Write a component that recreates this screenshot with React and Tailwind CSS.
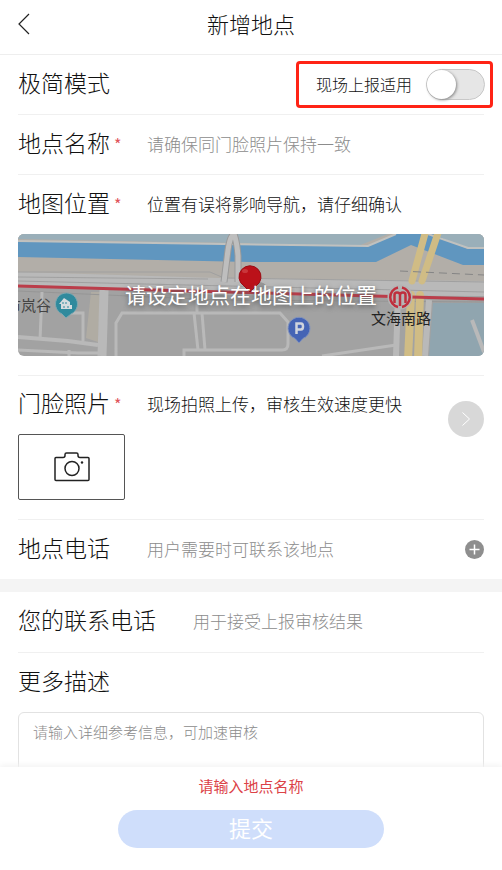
import React from "react";

function Label({ htmlFor, required, children }) {
  return (
    <label htmlFor={htmlFor} className="flex shrink-0 items-center pb-1.5 text-[23px] leading-8 text-[#111111]">
      {children}
      <span className="w-[37px] pt-1 pl-1 text-base leading-7 font-normal text-[#e0525a]">{required ? "*" : ""}</span>
    </label>
  );
}

function MapPreview() {
  return (
    <svg viewBox="0 0 466 122" preserveAspectRatio="xMidYMid slice" className="block h-full w-full" aria-hidden="true">
      <rect width="466" height="122" fill="#a2a2a2" />
      {/* land north of the main road */}
      <path d="M0 0H466V50H0Z" fill="#b2aea8" />
      <path d="M0 0H232V9L150 8L0 5Z" fill="#9aafb9" />
      <path d="M232 0H370L340 12H232Z" fill="#9aafb9" />
      <path d="M418 0H466V14L432 12Z" fill="#9aafb9" />
      {/* river */}
      <path d="M0 7L205 10L350 12L378 0H415L450 15H466V31H445L393 11L358 28H232L0 23Z" fill="#6096bf" />
      <path d="M0 7L205 10L350 12L378 0" fill="none" stroke="#c0c1bf" strokeWidth="2" />
      <path d="M410 0L450 14H466" fill="none" stroke="#c0c1bf" strokeWidth="2" />
      {/* park and lake */}
      <path d="M73 58H82L80 108L68 104Z" fill="#b0aca3" />
      <path d="M415 69H466V122H411Z" fill="#90a5af" />
      {/* main road */}
      <path d="M0 38L200 44L466 47V62L200 61L0 51Z" fill="#b9b9b9" />
      <path d="M0 38H192L206 44L466 48" fill="none" stroke="#a0a0a0" />
      <path d="M0 43L190 45" fill="none" stroke="#a0a0a0" />
      <path d="M0 47L466 58" fill="none" stroke="#a0a0a0" />
      <path d="M0 57L200 66L466 68" fill="none" stroke="#969696" />
      <path d="M206 48L210 16Q212 2 216 0Q219 8 220 22V48" fill="none" stroke="#999999" strokeWidth="7" />
      <path d="M206 48L210 16Q212 2 216 0Q219 8 220 22V48" fill="none" stroke="#bebebe" strokeWidth="5" />
      {/* side streets */}
      <g fill="none" stroke="#b9b9b9" strokeWidth="4">
        <path d="M86 56L84 122" strokeWidth="9" />
        <path d="M24 58L22 106" strokeWidth="3" />
        <path d="M0 103L50 107L80 111" />
        <path d="M0 116L60 119L80 119M51 116V122" strokeWidth="3" />
        <path d="M52 79H65V107" strokeWidth="3" />
        <path d="M98 122V89L104 79H262L270 88V110Q270 116 264 116H166V122" strokeWidth="3" />
        <path d="M179 66V79M176 79L180 116M184 79L187 116" strokeWidth="3" />
        <path d="M304 122L378 111" strokeWidth="3" />
        <path d="M380 63L378 122" strokeWidth="6" />
        <path d="M411 66L407 122" strokeWidth="6" />
        <path d="M454 86L466 118" />
      </g>
      {/* highway */}
      <g fill="none" stroke="#d0bc85" strokeLinecap="round">
        <path d="M408 -4L394 47" strokeWidth="7" />
        <path d="M421 -4L404 47" strokeWidth="7" />
        <path d="M393 61L390 126" strokeWidth="8" />
        <path d="M402 61L400 126" strokeWidth="8" />
      </g>
      <path d="M382 37L466 41" stroke="#858585" strokeDasharray="8 5" />
      {/* metro line and station */}
      <path d="M0 52L170 57L466 65" fill="none" stroke="#bb3d4a" strokeWidth="3" />
      <circle cx="382" cy="63" r="12.500" fill="#b5b5b5" />
      <path d="M380 53.500A10 10 0 0 0 380 73M384 53.500A10 10 0 0 1 384 73" fill="none" stroke="#bf2f3d" strokeWidth="2.500" />
      <path d="M376.500 69V61Q376.500 58.500 379 58.500Q382 58.500 382 61V72M382 61Q382 58.500 385 58.500Q387.500 58.500 387.500 61V69" fill="none" stroke="#bf2f3d" strokeWidth="2.500" />
      <text x="383" y="90" textAnchor="middle" fontSize="15" fontWeight="400" fill="#222222">文海南路</text>
      <text x="33" y="77" textAnchor="end" fontSize="15" fontWeight="400" fill="#444444">市岚谷</text>
      {/* building marker */}
      <path d="M48 84L44 80A11 11 0 1 1 53 80Z" fill="#308a9d" stroke="#7fa7b0" />
      <path d="M41 70L46 64L52 68V71H54V75H43V70Z" fill="#d5dcdf" />
      <path d="M45 68V70M48 68V70M46 72V74M50 72V74" stroke="#308a9d" />
      {/* parking marker */}
      <path d="M281 109L277 104.500A11 11 0 1 1 285 104.500Z" fill="#4564b5" stroke="#8495bd" />
      <path d="M278.500 100V89.500H283Q285 89.500 285 92.500Q285 95.500 283 95.500H279" fill="none" stroke="#d0d4dd" strokeWidth="2.500" />
      {/* selected place */}
      <ellipse cx="240" cy="52" rx="8" ry="4" fill="#888888" opacity="0.7" />
      <path d="M232 58L226 52A11 11 0 1 1 238 52Z" fill="#bb1119" stroke="#9a0e15" />
      <ellipse cx="227" cy="37" rx="3" ry="2" fill="#c9363b" />
    </svg>
  );
}

export default function App() {
  return (
    <div className="flex h-screen flex-col bg-white font-['Noto_Sans_CJK_SC',sans-serif] font-light text-[#111111]">
      <header className="grid h-[55px] shrink-0 grid-cols-[1fr_auto_1fr] items-center border-b border-[#eeeeee] px-[18px] pb-2">
        <button type="button" aria-label="返回" className="w-8">
          <svg viewBox="0 0 12 22" className="mt-0.5 h-[22px] w-3" fill="none" stroke="#222" strokeWidth="1.2">
            <path d="M11 1L1 11L11 21" />
          </svg>
        </button>
        <h1 className="text-[22px] leading-8">新增地点</h1>
      </header>

      <main className="min-h-0 flex-1 overflow-hidden">
        <div className="px-[18px]">
          <div className="flex h-[60px] items-center justify-between border-b border-[#f0f0f0]">
            <Label htmlFor="simple">极简模式</Label>
            <div className="-mr-[9px] flex h-[47px] items-center gap-3.5 rounded-sm border-3 border-[#ff2315] pr-[5px] pl-[17px]">
              <label htmlFor="simple" className="pb-0.5 text-base">现场上报适用</label>
              <input
                id="simple"
                type="checkbox"
                role="switch"
                className="h-[31px] w-[59px] appearance-none rounded-full border border-[#c8c8c8] bg-[#e6e6e6] before:block before:size-[29px] before:rounded-full before:bg-white before:shadow-[1px_1px_3px_#888888] checked:bg-[#4a86f7] checked:before:ml-auto"
              />
            </div>
          </div>

          <div className="flex h-[60px] items-center border-b border-[#f0f0f0]">
            <Label htmlFor="name" required>地点名称</Label>
            <input id="name" placeholder="请确保同门脸照片保持一致" className="min-w-0 flex-1 pb-0.5 text-[17px] outline-none placeholder:text-[#8c8c8c]" />
          </div>

          <section className="border-b border-[#f0f0f0] pb-[19px]">
            <div className="flex h-[59px] items-center">
              <Label htmlFor="map" required>地图位置</Label>
              <p className="pb-0.5 text-[17px]">位置有误将影响导航，请仔细确认</p>
            </div>
            <button id="map" type="button" className="relative block h-[122px] w-full overflow-hidden rounded-md">
              <MapPreview />
              <span className="absolute inset-0 flex items-center justify-center text-[21px] font-normal text-white [text-shadow:0_2px_5px_#555555]">
                请设定地点在地图上的位置
              </span>
            </button>
          </section>

          <section className="flex items-start justify-between border-b border-[#f0f0f0] pb-[19px]">
            <div>
              <div className="flex h-[58px] items-center">
                <Label htmlFor="photo" required>门脸照片</Label>
                <p className="pb-0.5 text-[17px]">现场拍照上传，审核生效速度更快</p>
              </div>
              <button id="photo" type="button" aria-label="拍照" className="flex h-[66px] w-[107px] items-center justify-center rounded-xs border border-[#555555]">
                <svg viewBox="0 0 36 30" className="h-[30px] w-9" fill="none" stroke="#222" strokeWidth="1.5">
                  <path d="M2 5.500H9Q11 5.500 11 3.500V2.500Q11 1 12.500 1H22.500Q24 1 24 2.500V3.500Q24 5.500 26 5.500H34Q35 5.500 35 6.500V27.500Q35 28.500 34 28.500H2Q1 28.500 1 27.500V6.500Q1 5.500 2 5.500Z" />
                  <circle cx="18" cy="16.500" r="7" />
                  <circle cx="28" cy="10.500" r="1.200" fill="#222" stroke="none" />
                </svg>
              </button>
            </div>
            <button type="button" aria-label="下一步" className="mt-[25px] flex size-9 items-center justify-center rounded-full bg-[#d8d8d8]">
              <svg viewBox="0 0 8 14" className="h-3.5 w-2" fill="none" stroke="#fff" strokeWidth="1">
                <path d="M0.500 0.500L7.500 7L0.500 13.500" />
              </svg>
            </button>
          </section>

          <div className="flex h-[59px] items-center">
            <Label htmlFor="phone">地点电话</Label>
            <input id="phone" type="tel" placeholder="用户需要时可联系该地点" className="min-w-0 flex-1 pb-0.5 text-[17px] outline-none placeholder:text-[#8c8c8c]" />
            <button type="button" aria-label="添加电话">
              <svg viewBox="0 0 19 19" className="size-[19px]" stroke="#fff" strokeWidth="1.5">
                <circle cx="9.500" cy="9.500" r="9.500" fill="#8e8e8e" stroke="none" />
                <path d="M4.500 9.500H14.500M9.500 4.500V14.500" />
              </svg>
            </button>
          </div>
        </div>

        <div className="h-[13px] bg-[#f4f4f4]" />

        <div className="px-[18px]">
          <div className="flex h-[61px] items-center border-b border-[#f0f0f0]">
            <Label htmlFor="contact">您的联系电话</Label>
            <input id="contact" type="tel" placeholder="用于接受上报审核结果" className="min-w-0 flex-1 pb-0.5 text-[17px] outline-none placeholder:text-[#8c8c8c]" />
          </div>
          <div className="flex h-[59px] items-center">
            <Label htmlFor="more">更多描述</Label>
          </div>
          <textarea
            id="more"
            placeholder="请输入详细参考信息，可加速审核"
            className="block h-32 w-full resize-none rounded-md border border-[#e2e2e2] px-3.5 py-2 text-[15px] outline-none placeholder:text-[#8c8c8c]"
          />
        </div>
      </main>

      <footer className="relative flex h-[103px] shrink-0 flex-col items-center bg-white pt-[7px] shadow-[0_-2px_6px_#f3f3f3]">
        <p role="alert" className="text-[15px] leading-6 font-normal text-[#dc4247]">请输入地点名称</p>
        <button type="button" className="mt-3 h-[38px] w-[53%] rounded-full bg-[#cfdefb] pb-1 text-[22px] leading-8 font-normal text-white">提交</button>
      </footer>
    </div>
  );
}
